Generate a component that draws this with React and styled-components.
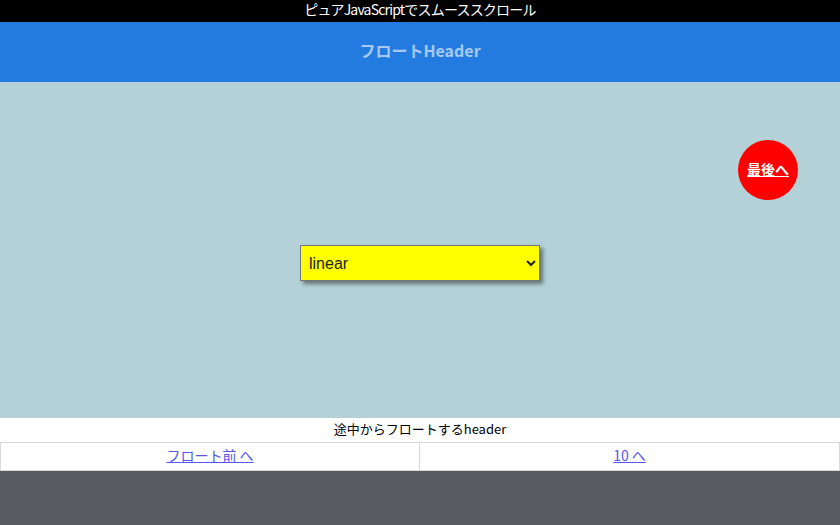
import React from "react";
import styled, { createGlobalStyle } from "styled-components";

const GlobalStyle = createGlobalStyle`
  html, body {
    margin: 0;
    padding: 0;
    background: #575b5f;
    font-family: "Noto Sans CJK JP", "DejaVu Sans", sans-serif;
  }
`;

const Page = styled.div`
  width: 840px;
  min-height: 525px;
  display: flex;
  flex-direction: column;
  background: #575b5f;
`;

const TopBar = styled.div`
  height: 22px;
  background: #000;
  color: #fff;
  font-size: 14px;
  line-height: 19px;
  letter-spacing: -0.8px;
  text-align: center;
`;

const FloatHeader = styled.header`
  height: 60px;
  box-sizing: border-box;
  padding-bottom: 4px;
  background: #247bdf;
  color: #a6c9f2;
  font-size: 16px;
  font-weight: bold;
  display: flex;
  align-items: center;
  justify-content: center;
`;

const Main = styled.main`
  position: relative;
  height: 336px;
  background: #b3d1d6;
  display: flex;
  justify-content: center;
  align-items: flex-start;
  padding-top: 163px;
  box-sizing: border-box;
`;

const EasingSelect = styled.select`
  width: 240px;
  height: 36px;
  background: #ffff00;
  border: 1px solid #767676;
  box-shadow: 3px 3px 4px rgba(0, 0, 0, 0.45);
  font-family: "Liberation Sans", Arial, sans-serif;
  font-size: 16px;
  color: #222;
  padding: 0 4px;
  border-radius: 0;
`;

const RoundButton = styled.a`
  position: absolute;
  top: 58px;
  right: 42px;
  width: 60px;
  height: 60px;
  box-sizing: border-box;
  padding-bottom: 3px;
  border-radius: 50%;
  background: #ff0000;
  color: #fff;
  font-size: 14px;
  font-weight: bold;
  display: flex;
  align-items: center;
  justify-content: center;
  text-decoration: underline;
`;

const Caption = styled.div`
  height: 24px;
  background: #fff;
  color: #000;
  font-size: 13px;
  line-height: 22px;
  text-align: center;
`;

const NavRow = styled.div`
  display: grid;
  grid-template-columns: 1fr 1fr;
  background: #fff;
`;

const NavCell = styled.div`
  height: 27px;
  box-sizing: content-box;
  border: 1px solid #d8d8d8;
  display: flex;
  align-items: center;
  justify-content: center;
  padding-bottom: 0;
  & + & {
    border-left: none;
  }
`;

const NavLink = styled.a`
  color: #5555ee;
  font-size: 14px;
  line-height: 1;
  padding-bottom: 3px;
  text-decoration: underline;
`;

export default function App() {
  return (
    <>
      <GlobalStyle />
      <Page>
        <TopBar>ピュアJavaScriptでスムーススクロール</TopBar>
        <FloatHeader>フロートHeader</FloatHeader>
        <Main>
          <EasingSelect defaultValue="linear">
            <option value="linear">linear</option>
            <option value="easeInQuad">easeInQuad</option>
            <option value="easeOutQuad">easeOutQuad</option>
          </EasingSelect>
          <RoundButton href="#last">最後へ</RoundButton>
        </Main>
        <Caption>途中からフロートするheader</Caption>
        <NavRow>
          <NavCell>
            <NavLink href="#before">フロート前 へ</NavLink>
          </NavCell>
          <NavCell>
            <NavLink href="#ten">10 へ</NavLink>
          </NavCell>
        </NavRow>
      </Page>
    </>
  );
}
